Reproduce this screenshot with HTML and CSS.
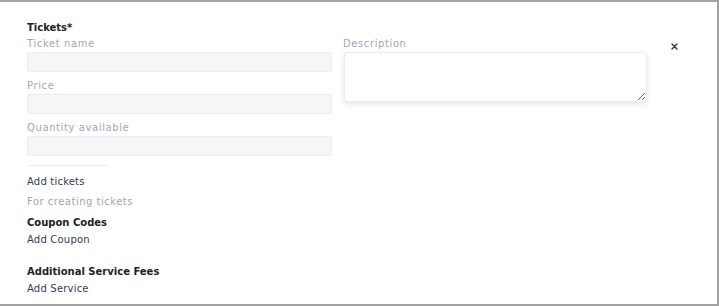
FILE: index.html
```html
<!DOCTYPE html>
<html lang="en">
<head>
    <meta charset="UTF-8">
    <meta name="viewport" content="width=device-width, initial-scale=1.0">
    <title>Tickets</title>
    <link rel="stylesheet" href="styles.css">
</head>
<body>
    <div class="card">
        <h3 class="section-title">Tickets*</h3>
        <div class="ticket-row">
            <div class="ticket-fields">
                <div class="field">
                    <label for="tname">Ticket name</label>
                    <input type="text" id="tname" class="text-input">
                </div>
                <div class="field">
                    <label for="tprice">Price</label>
                    <input type="text" id="tprice" class="text-input">
                </div>
                <div class="field">
                    <label for="tqty">Quantity available</label>
                    <input type="text" id="tqty" class="text-input">
                </div>
            </div>
            <div class="ticket-desc">
                <label for="tdesc">Description</label>
                <textarea id="tdesc" class="desc-input"></textarea>
            </div>
            <button type="button" class="remove-btn" aria-label="Remove">
                <svg width="7" height="7" viewBox="0 0 7 7">
                    <path d="M1 1L6 6M6 1L1 6" stroke="#333" stroke-width="1.4" stroke-linecap="round"/>
                </svg>
            </button>
        </div>
        <hr class="divider">
        <a href="#" class="add-link first-link">Add tickets</a>
        <p class="hint">For creating tickets</p>
        <h3 class="section-title coupon-title">Coupon Codes</h3>
        <a href="#" class="add-link">Add Coupon</a>
        <h3 class="section-title fees-title">Additional Service Fees</h3>
        <a href="#" class="add-link">Add Service</a>
    </div>
</body>
</html>
```

FILE: styles.css
```css
body {
    margin: 0;
    font-family: "DejaVu Sans", Verdana, sans-serif;
    background-color: white;
}
.card {
    box-sizing: border-box;
    height: 306px;
    padding: 19px 0 0 27px;
    border-top: 2px solid #a3a3a3;
    border-right: 2px solid #a3a3a3;
    border-bottom: 2px solid #a3a3a3;
    display: flex;
    flex-direction: column;
    align-items: flex-start;
}
.section-title {
    margin: 0;
    font-size: 10px;
    line-height: 14px;
    font-weight: bold;
    color: #222;
}
.ticket-row {
    display: flex;
    align-items: flex-start;
    margin-top: 1px;
}
.ticket-fields {
    width: 305px;
    display: flex;
    flex-direction: column;
    gap: 6px;
}
.field {
    display: flex;
    flex-direction: column;
}
label {
    font-size: 10px;
    line-height: 14px;
    letter-spacing: 0.6px;
    color: #a5a5b7;
    margin-bottom: 2px;
    padding-top: 1px;
}
.field label {
    margin-bottom: 1px;
}
.text-input {
    box-sizing: border-box;
    height: 20px;
    margin: 0;
    border: 1px solid #ededf1;
    border-radius: 2px;
    background-color: #f6f6f8;
}
.ticket-desc {
    width: 303px;
    margin-left: 12px;
    display: flex;
    flex-direction: column;
}
.ticket-desc label {
    margin-left: -1px;
    margin-bottom: 1px;
}
.desc-input {
    box-sizing: border-box;
    height: 50px;
    margin: 0;
    border: 1px solid #ececf2;
    border-radius: 3px;
    box-shadow: 0 2px 6px rgba(40, 40, 80, 0.12);
    background-color: white;
}
.remove-btn {
    margin: 7px 0 0 24px;
    padding: 0;
    width: 7px;
    height: 7px;
    border: none;
    background: none;
    cursor: pointer;
    display: flex;
}
.divider {
    width: 81px;
    margin: 9px 0 0 0;
    border: none;
    border-top: 1px solid #ededf0;
}
.add-link {
    font-size: 10px;
    line-height: 14px;
    letter-spacing: 0.2px;
    color: #2f3d55;
    text-decoration: none;
}
.first-link {
    margin-top: 9px;
}
.hint {
    margin: 6px 0 0 0;
    font-size: 10px;
    line-height: 14px;
    letter-spacing: 0.5px;
    color: #a5a5b7;
}
.coupon-title {
    margin-top: 7px;
}
.coupon-title + .add-link {
    margin-top: 3px;
}
.fees-title {
    margin-top: 18px;
}
.fees-title + .add-link {
    margin-top: 3px;
}
```
